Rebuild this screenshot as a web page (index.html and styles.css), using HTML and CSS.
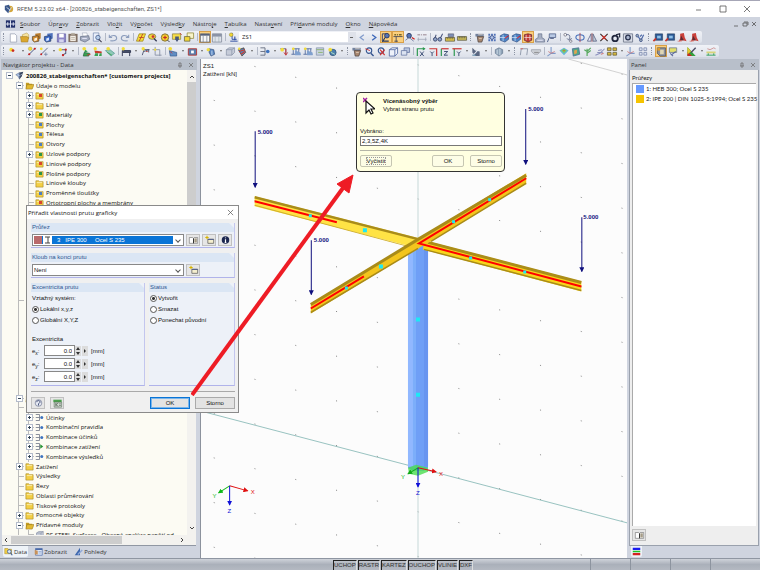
FILE: index.html
```html
<!DOCTYPE html>
<html lang="cs">

<head>
    <meta charset="UTF-8">
    <meta name="viewport" content="width=device-width, initial-scale=1.0">
    <title>RFEM 5.23.02 x64</title>
    <link rel="stylesheet" href="styles.css">
</head>

<body>
    <!-- icon set -->
    <svg class="defs" aria-hidden="true">
        <symbol id="new" viewBox="0 0 12 12"><path d="M3 2h5l2 2v7H3z" fill="#fff" stroke="#8a93a8" stroke-width=".7"/></symbol>
        <symbol id="open" viewBox="0 0 12 12"><path d="M3 3l5-2 2 2v4l-6 3z" fill="#f6e3a0" stroke="#a98a35" stroke-width=".5"/><path d="M1 5h7l2 1-1 5H2z" fill="#dba72e" stroke="#8c6a1c" stroke-width=".5"/></symbol>
        <symbol id="book-o" viewBox="0 0 12 12"><path d="M4 2l6-1v6l-5 2z" fill="#b97b2c"/><path d="M1 5l5-1 2 1v5l-5 1-2-2z" fill="#d08a30" stroke="#4b3a24" stroke-width=".7"/><path d="M3 7l3-1v3l-3 1z" fill="#fff3d8"/></symbol>
        <symbol id="book-b" viewBox="0 0 12 12"><path d="M4 2l6-1v6l-5 2z" fill="#4c70bb"/><path d="M1 5l5-1 2 1v5l-5 1-2-2z" fill="#3a68c4" stroke="#243557" stroke-width=".7"/><path d="M3 7l3-1v3l-3 1z" fill="#d8e6ff"/></symbol>
        <symbol id="save" viewBox="0 0 12 12"><path d="M2 2h9v9H2z" fill="#8c86c8" stroke="#55519b" stroke-width=".6"/><path d="M4 2h5v4H4z" fill="#fff"/><path d="M4 8h5v3H4z" fill="#d4d4ee"/></symbol>
        <symbol id="clip" viewBox="0 0 12 12"><path d="M1 2h10v9H1z" fill="#806f62"/><path d="M3 4h6v6H3z" fill="#f3eee6"/><path d="M4 1h4v2H4z" fill="#b8b0a4"/><path d="M4 6h4M4 8h4" stroke="#a79c8d" stroke-width=".7"/></symbol>
        <symbol id="print" viewBox="0 0 12 12"><path d="M3 1h5l1 4H4z" fill="#fff" stroke="#8a93a8" stroke-width=".5"/><path d="M1 5l9-1 1 4-5 3-5-2z" fill="#a4acc0" stroke="#59627c" stroke-width=".7"/><path d="M3 7h5" stroke="#eef" stroke-width="1"/></symbol>
        <symbol id="preview" viewBox="0 0 12 12"><path d="M2 1h6v9H2z" fill="#eaf0fb" stroke="#6c7ea8" stroke-width=".7"/><circle cx="7" cy="6" r="2.4" fill="#b6cdea" stroke="#3f5685" stroke-width=".8"/><path d="M8 8l3 3" stroke="#445" stroke-width="1.3"/></symbol>
        <symbol id="undo" viewBox="0 0 12 12"><path d="M2 3v3h3M2 6c3-3 8-3 8 1 0 2-3 3-7 2.500" fill="none" stroke="#8c9dbd" stroke-width="1.200"/></symbol>
        <symbol id="redo" viewBox="0 0 12 12"><path d="M10 3v3H7M10 6C7 3 2 3 2 7c0 2 3 3 7 2.500" fill="none" stroke="#8c9dbd" stroke-width="1.200"/></symbol>
        <symbol id="slab" viewBox="0 0 12 12"><path d="M4 2h7l-3 8H1z" fill="#f4dc35" stroke="#8d7715" stroke-width=".7"/><path d="M8 2L4 10M4 6h5" stroke="#c03a2a" stroke-width=".9"/></symbol>
        <symbol id="find" viewBox="0 0 12 12"><ellipse cx="5" cy="5" rx="4" ry="3" fill="#f2d73a" stroke="#6d6842" stroke-width=".8"/><circle cx="6" cy="5" r="1.500" fill="#c33"/><path d="M7 7l3 3" stroke="#343b55" stroke-width="1.500"/></symbol>
        <symbol id="ring" viewBox="0 0 12 12"><circle cx="6" cy="6" r="4" fill="#f6ce2c" stroke="#7c6b38" stroke-width="1"/><path d="M4 6h4M6 4v4" stroke="#c22c25" stroke-width="1.300"/><path d="M9 9l2 2" stroke="#334" stroke-width="1"/></symbol>
        <symbol id="board" viewBox="0 0 12 12"><path d="M1 2h9v6H1z" fill="#f7dd48" stroke="#7e7437" stroke-width=".7"/><path d="M4 5h4v3l-2 3-2-3z" fill="#49597b"/><path d="M9 1l2 2" stroke="#c33" stroke-width="1"/></symbol>
        <symbol id="wins" viewBox="0 0 12 12"><path d="M4 1h7v6H4z" fill="#f8f4c9" stroke="#8d8533" stroke-width=".8"/><path d="M1 5h6v5H1z" fill="#f2d73a" stroke="#666036" stroke-width=".8"/></symbol>
        <symbol id="table" viewBox="0 0 12 12"><path d="M1 2h10v9H1z" fill="#f7f7f7" stroke="#555c6c" stroke-width=".8"/><path d="M1 2h10v2H1z" fill="#566078"/><path d="M4 4v7M8 4v7" stroke="#777f90" stroke-width=".8"/></symbol>
        <symbol id="table2" viewBox="0 0 12 12"><path d="M1 2h10v9H1z" fill="#dfe3eb" stroke="#7d8596" stroke-width=".8"/><path d="M1 2h10v3H1z" fill="#8a93a6"/><path d="M4 5v6M8 5v6" stroke="#9aa" stroke-width=".6"/></symbol>
        <symbol id="load" viewBox="0 0 12 12"><path d="M5 1v7h5M3 10h8" fill="none" stroke="#2b49a0" stroke-width="1"/><circle cx="4" cy="3" r="2" fill="#f1d631" stroke="#867a2b" stroke-width=".5"/><path d="M8 5v4" stroke="#2b49a0" stroke-width="1.200"/></symbol>
        <symbol id="prev" viewBox="0 0 12 12"><path d="M8 3L4 6l4 3" fill="none" stroke="#7f9acb" stroke-width="1.300"/></symbol>
        <symbol id="next" viewBox="0 0 12 12"><path d="M4 3l4 3-4 3" fill="none" stroke="#3b66b8" stroke-width="1.400"/></symbol>
        <symbol id="eye" viewBox="0 0 12 12"><path d="M2 10V2h4" fill="none" stroke="#2d3d68" stroke-width="1"/><circle cx="7" cy="4" r="2.500" fill="#5675b6" stroke="#26365e" stroke-width="1"/><path d="M5 6l-3 5M3 10h6" stroke="#26365e" stroke-width="1.200"/></symbol>
        <symbol id="eye-r" viewBox="0 0 12 12"><circle cx="5" cy="4" r="2.500" fill="#5675b6" stroke="#26365e" stroke-width="1"/><path d="M1 9l4-3 5 4" fill="none" stroke="#6e7ba0" stroke-width="1"/><path d="M8 6l3 2" stroke="#c22" stroke-width="1.400"/></symbol>
        <symbol id="dim" viewBox="0 0 12 12"><path d="M2 3h2m1 0h1m1 0h3" stroke="#7e6a28" stroke-width="1.600"/><path d="M1 5h10M4 5v6M2 10h4" stroke="#3c4258" stroke-width=".9"/></symbol>
        <symbol id="dim-g" viewBox="0 0 12 12"><path d="M1 3h3m1 0h1m1 0h4" stroke="#b3a7b1" stroke-width="1.600"/><path d="M1 8h10M2 6v4M10 6v4" stroke="#9ba2b4" stroke-width=".8"/></symbol>
        <symbol id="glass" viewBox="0 0 12 12"><path d="M2 8l2-5M8 8l3-6" stroke="#46527a" stroke-width="1.100"/><circle cx="3" cy="8" r="2" fill="#8ea3c8" stroke="#303c62" stroke-width=".9"/><circle cx="8" cy="8" r="2" fill="#8ea3c8" stroke="#303c62" stroke-width=".9"/></symbol>
        <symbol id="ruler" viewBox="0 0 12 12"><path d="M1 6h10v4H1z" fill="#e1c84c" stroke="#57543c" stroke-width=".8"/><path d="M3 6v2M5 6v2M7 6v2M9 6v2" stroke="#444" stroke-width=".7"/><path d="M4 2h6v3H4z" fill="#7d8fb8" stroke="#445" stroke-width=".5"/></symbol>
        <symbol id="ruler2" viewBox="0 0 12 12"><path d="M1 5h10v4H1z" fill="#cfc05c" stroke="#57543c" stroke-width=".8"/><path d="M3 5v2M5 5v2M7 5v2M9 5v2" stroke="#444" stroke-width=".8"/></symbol>
        <symbol id="hand" viewBox="0 0 12 12"><path d="M1 2h9v3H1z" fill="#73829e"/><path d="M3 5h7l-2 6H4z" fill="#a98870" stroke="#4a3f3c" stroke-width=".8"/><path d="M4 3h5M5 7h3" stroke="#e9dccb" stroke-width=".8"/></symbol>
        <symbol id="dots" viewBox="0 0 12 12"><path d="M2 2h2v2H2zM5 2h2v2H5zM8 2h2v2H8zM2 5h2v2H2zM8 5h2v2H8zM2 8h2v2H2zM5 8h2v2H5zM8 8h2v2H8z" fill="#5273b8"/><circle cx="6" cy="6" r="2" fill="#b3c5e8" stroke="#2f4680" stroke-width=".8"/></symbol>
        <symbol id="cube-b" viewBox="0 0 12 12"><path d="M2 4l4-2 5 1v5l-4 3-5-2z" fill="#4c83c4" stroke="#29477c" stroke-width=".7"/><path d="M1 6h8M5 3v7" stroke="#cfe2f8" stroke-width=".8"/><path d="M7 7l4-3" stroke="#c23" stroke-width="1.100"/></symbol>
        <symbol id="cube-r" viewBox="0 0 12 12"><path d="M2 3l4-1 4 1v6l-4 2-4-2z" fill="#c33a34" stroke="#5a2230" stroke-width=".8"/><path d="M4 3v6M8 3v6M2 6h8" stroke="#f3dada" stroke-width=".8"/></symbol>
        <symbol id="stamp" viewBox="0 0 12 12"><path d="M4 2h4v4l3 2v3H1V8l3-2z" fill="#a5aec2" stroke="#626d88" stroke-width=".7"/><path d="M3 9h6" stroke="#eef" stroke-width="1"/></symbol>
        <symbol id="flag" viewBox="0 0 12 12"><path d="M3 2h7v4H3z" fill="#b9c9e4" stroke="#495a83" stroke-width=".8"/><path d="M3 6l-2 5M4 7h4" stroke="#495a83" stroke-width="1"/></symbol>
        <symbol id="move" viewBox="0 0 12 12"><circle cx="3" cy="3" r="1.500" fill="#fff" stroke="#556" stroke-width=".7"/><path d="M4 3c4-1 5 2 3 5M5 7l2 2 3-2" fill="none" stroke="#4b587b" stroke-width=".9"/><circle cx="9" cy="10" r="1.300" fill="#fff" stroke="#556" stroke-width=".7"/></symbol>
        <symbol id="rotate" viewBox="0 0 12 12"><ellipse cx="6" cy="6" rx="4.500" ry="3" fill="none" stroke="#3f6bb9" stroke-width="1.100"/><path d="M6 1v10" stroke="#a34b5a" stroke-width="1"/></symbol>
        <symbol id="mirror" viewBox="0 0 12 12"><path d="M5 2v8H1z" fill="#eef" stroke="#4b587b" stroke-width=".8"/><path d="M7 2v8h4z" fill="#c4cad8" stroke="#4b587b" stroke-width=".8"/><path d="M6 1v10" stroke="#a33" stroke-width=".6"/></symbol>
        <symbol id="cross" viewBox="0 0 12 12"><path d="M2 2l8 8M10 2l-8 8" stroke="#3c3434" stroke-width="1.300"/><path d="M4 4l4 4M8 4L4 8" stroke="#d8322a" stroke-width="1.300"/></symbol>
        <symbol id="donut" viewBox="0 0 12 12"><circle cx="5" cy="7" r="3" fill="#e4e8f2" stroke="#20263d" stroke-width="2"/><path d="M6 3l4-1v4" fill="none" stroke="#20263d" stroke-width="1.300"/></symbol>
        <symbol id="gear" viewBox="0 0 12 12"><path d="M1 2h10v9H1z" fill="#d8dce6" stroke="#6c7488" stroke-width=".9"/><circle cx="6" cy="6" r="2.500" fill="#aab6ce" stroke="#2a3350" stroke-width="1.400"/></symbol>
        <symbol id="check" viewBox="0 0 12 12"><circle cx="3" cy="4" r="1.500" fill="#9ab" stroke="#34497f" stroke-width=".8"/><path d="M4 5l3 4 3-6M6 5l2-2" fill="none" stroke="#4f6aa8" stroke-width="1.300"/><circle cx="7" cy="9" r="1.500" fill="#9ab" stroke="#34497f" stroke-width=".8"/></symbol>
        <symbol id="mod" viewBox="0 0 12 12"><path d="M3 2h8v7H3z" fill="#2c5a96" stroke="#1d3657" stroke-width=".6"/><path d="M5 4h4v3H5z" fill="#8fc0e8"/><path d="M1 10l3-3" stroke="#c6332b" stroke-width="1.800"/></symbol>
        <symbol id="pdf" viewBox="0 0 12 12"><path d="M4 2l4-1 1 5 2 4-4-1-5 2 2-4z" fill="#c9403a"/><path d="M5 4l3 5H4z" fill="#5d2a33"/><path d="M1 10h5" stroke="#e0a4a0" stroke-width="1"/></symbol>

        <symbol id="node" viewBox="0 0 12 12"><circle cx="4" cy="4" r="2" fill="#f1dc3c"/><circle cx="6" cy="5" r="1.500" fill="#cc2a20"/></symbol>
        <symbol id="line" viewBox="0 0 12 12"><path d="M2 10l8-8" stroke="#3c4c7c" stroke-width="1"/><circle cx="3" cy="9" r="1.200" fill="#c22"/><circle cx="9" cy="3" r="1.200" fill="#c22"/><circle cx="4" cy="3" r="2" fill="#f1dc3c" stroke="#998a28" stroke-width=".4"/></symbol>
        <symbol id="member" viewBox="0 0 12 12"><path d="M2 10l8-8" stroke="#596787" stroke-width="1"/><circle cx="3" cy="3" r="1.500" fill="#f1dc3c"/><circle cx="3" cy="9" r="1" fill="#c22"/><path d="M8 7v4M6 9h4" stroke="#6a7c9f" stroke-width=".8"/></symbol>
        <symbol id="poly" viewBox="0 0 12 12"><path d="M3 4h6v4l-4 2" fill="none" stroke="#4d5570" stroke-width="1.100"/><circle cx="3" cy="4" r="1.800" fill="#f1dc3c"/><circle cx="9" cy="4" r="1.200" fill="#c22"/><circle cx="6" cy="10" r="1.200" fill="#c22"/></symbol>
        <symbol id="sup" viewBox="0 0 12 12"><path d="M5 4l3 2-4 1z" fill="#2b9c48"/><path d="M4 7l6 1-1 3H3z" fill="#3aa353" stroke="#1d5a37" stroke-width=".7"/><circle cx="4" cy="3" r="2" fill="#f1dc3c"/><path d="M7 10l4-1" stroke="#c33" stroke-width="1"/></symbol>
        <symbol id="sup2" viewBox="0 0 12 12"><path d="M2 5l8 1v2H3z" fill="#c73b2e"/><path d="M3 8h3v3H2zM8 8h2v3H7z" fill="#3aa353"/><circle cx="3" cy="3" r="1.800" fill="#f1dc3c"/></symbol>
        <symbol id="sup3" viewBox="0 0 12 12"><path d="M1 5l5-1 5 4-4 3z" fill="#8ec9b8" stroke="#4a8e8a" stroke-width=".7"/><circle cx="4" cy="3" r="2" fill="#f1dc3c"/><path d="M3 7l5 3" stroke="#3aa353" stroke-width="1"/></symbol>
        <symbol id="beam" viewBox="0 0 12 12"><path d="M2 5h9v2H2zM2 7v4M10 7v4" fill="#4d5570" stroke="#2d3550" stroke-width="1"/><circle cx="3" cy="3" r="1.800" fill="#f1dc3c"/></symbol>
        <symbol id="frame" viewBox="0 0 12 12"><path d="M3 10l2-6h6M5 6l5-2v3" fill="none" stroke="#4d5570" stroke-width="1"/><circle cx="4" cy="3" r="1.800" fill="#f1dc3c"/><path d="M7 6h2" stroke="#b44" stroke-width="1"/></symbol>
        <symbol id="crop" viewBox="0 0 12 12"><path d="M4 1v9h7M1 4h8v7" fill="none" stroke="#8c95a8" stroke-width="1"/><circle cx="4" cy="4" r="1.200" fill="#f1dc3c"/></symbol>
        <symbol id="surf" viewBox="0 0 12 12"><path d="M2 5l8 2v4H3z" fill="#5f8dc4" stroke="#2f5386" stroke-width=".7"/><circle cx="3" cy="3" r="2" fill="#f1dc3c"/><path d="M3 6l2 2" stroke="#c33" stroke-width="1"/></symbol>
        <symbol id="hole" viewBox="0 0 12 12"><path d="M2 3h9v7H2z" fill="#5a7fae" stroke="#b33834" stroke-width="1"/><path d="M5 5h3v3H5z" fill="#fff"/></symbol>
        <symbol id="solid" viewBox="0 0 12 12"><path d="M4 3l5 1 1 5-4 2-2-4z" fill="#5a86c0" stroke="#2d4a78" stroke-width=".7"/><circle cx="3" cy="4" r="1.800" fill="#f1dc3c"/><path d="M7 5v5" stroke="#c7dcf3" stroke-width="1"/></symbol>
        <symbol id="box" viewBox="0 0 12 12"><path d="M2 4l3-2h6v5l-3 3H2z" fill="#c6ccd9" stroke="#8891a6" stroke-width=".8"/><path d="M2 4h6v6M8 4l3-2" fill="none" stroke="#8891a6" stroke-width=".8"/></symbol>
        <symbol id="mesh" viewBox="0 0 12 12"><path d="M2 4l6-2 2 5-4 4z" fill="#5a82b4" stroke="#41311f" stroke-width=".7"/><path d="M3 6l6-2M5 9l4-3" stroke="#d43c2e" stroke-width="1.200"/><circle cx="3" cy="3" r="1.300" fill="#f1dc3c"/></symbol>
        <symbol id="combo" viewBox="0 0 12 12"><path d="M1 2h5v8H1M1 6h5" fill="none" stroke="#666d80" stroke-width="1"/><circle cx="9" cy="6" r="2" fill="#3f74bf"/></symbol>
        <symbol id="combo-g" viewBox="0 0 12 12"><path d="M1 2h5v8H1M1 6h5" fill="none" stroke="#666d80" stroke-width="1"/><path d="M7 3l4 3-4 3z" fill="#249233"/></symbol>
        <symbol id="load-r" viewBox="0 0 12 12"><path d="M2 3h6v7" fill="none" stroke="#596787" stroke-width="1"/><circle cx="4" cy="4" r="2" fill="#f1dc3c"/><path d="M8 3v6M6 7l2 3 2-3" fill="none" stroke="#c33" stroke-width="1"/></symbol>
        <symbol id="load-b" viewBox="0 0 12 12"><path d="M1 9h10M2 3h8M3 3v6M6 3v6M9 3v6" stroke="#4a6399" stroke-width=".9"/><path d="M5 5l6 2v3H5z" fill="#7fa0cf"/><circle cx="3" cy="3" r="1.500" fill="#f1dc3c"/></symbol>
        <symbol id="load-y" viewBox="0 0 12 12"><path d="M2 2h8v8H2z" fill="#c8d2df" stroke="#8190aa" stroke-width=".8"/><path d="M2 4h8M4 7h5" stroke="#8bb26a" stroke-width="1"/></symbol>
        <symbol id="globe" viewBox="0 0 12 12"><circle cx="7" cy="7" r="3.500" fill="#4b7fae" stroke="#2e5475" stroke-width=".8"/><circle cx="4" cy="4" r="2" fill="#f1dc3c"/><path d="M5 7l4 2" stroke="#b6e2c3" stroke-width="1"/></symbol>
        <symbol id="lens" viewBox="0 0 12 12"><circle cx="6" cy="5" r="3" fill="#e5eefb" stroke="#35558f" stroke-width="1.200"/><path d="M2 3l5 2" stroke="#c33" stroke-width="1"/><path d="M8 8l3 3" stroke="#35558f" stroke-width="1.500"/></symbol>
        <symbol id="lens-x" viewBox="0 0 12 12"><circle cx="6" cy="5" r="3" fill="#e5eefb" stroke="#35558f" stroke-width="1.200"/><path d="M5 4l5 6M10 4l-5 6" stroke="#c33" stroke-width="1.300"/></symbol>
        <symbol id="tab-data" viewBox="0 0 12 12"><path d="M1 2h4l1 1h4v6H1z" fill="#f3cf45" stroke="#a98a26" stroke-width=".7"/><circle cx="7" cy="6" r="2.500" fill="#dbe9fb" stroke="#35558f" stroke-width="1"/><path d="M9 8l2 3" stroke="#35558f" stroke-width="1.400"/></symbol>
        <symbol id="tab-show" viewBox="0 0 12 12"><path d="M2 2h9v9H2z" fill="#dfe8f7" stroke="#4a6aa8" stroke-width=".9"/><path d="M2 2h9v2H2z" fill="#4a6aa8"/><path d="M1 4l4 1v5H1z" fill="#c8925a"/><path d="M6 6h4M6 8h4" stroke="#7a94c4" stroke-width=".8"/></symbol>
        <symbol id="wire" viewBox="0 0 12 12"><path d="M2 4l3-2h6v6l-3 3H2zM2 4h6v7M8 4l3-2" fill="#eef2fa" stroke="#5067a0" stroke-width=".9"/></symbol>
        <symbol id="boxes" viewBox="0 0 12 12"><path d="M5 2h6v5H5z" fill="#b9c6df" stroke="#5c6f9c" stroke-width=".8"/><path d="M2 5h6v5H2z" fill="#dbe3f1" stroke="#5c6f9c" stroke-width=".8"/></symbol>
        <symbol id="ax-x" viewBox="0 0 12 12"><path d="M2 11V3h8" fill="none" stroke="#2d9850" stroke-width="1.300"/><path d="M8 1l3 2-3 2z" fill="#2d9850"/><path d="M5 6l4 5M9 6l-4 5" stroke="#33466e" stroke-width="1"/></symbol>
        <symbol id="ax-y" viewBox="0 0 12 12"><path d="M2 3h8v8" fill="none" stroke="#c33" stroke-width="1.300"/><path d="M3 6l2 2 2-2M5 8v3" fill="none" stroke="#33466e" stroke-width="1"/></symbol>
        <symbol id="ax-z" viewBox="0 0 12 12"><path d="M2 11V3" stroke="#2d9850" stroke-width="1.300"/><path d="M2 3h8" stroke="#c33" stroke-width="1.300"/><path d="M5 6h4l-4 4h4" fill="none" stroke="#33466e" stroke-width="1"/></symbol>
        <symbol id="ax-ny" viewBox="0 0 12 12"><path d="M3 11V3" stroke="#2d9850" stroke-width="1.300"/><path d="M1 3h10" stroke="#c33" stroke-width="1.300"/><path d="M6 6l2 2 2-2M8 8v3" fill="none" stroke="#33466e" stroke-width="1"/></symbol>
        <symbol id="persp" viewBox="0 0 12 12"><path d="M2 2l3 3 5 1v5H6L2 7z" fill="#5b6781"/><path d="M4 9l6-7" stroke="#e8edf6" stroke-width="1.200"/><path d="M2 10h4" stroke="#479" stroke-width="1"/></symbol>
        <symbol id="disc" viewBox="0 0 12 12"><path d="M2 4l4-2 4 2v4l-4 3-4-3z" fill="#8fa3b8" stroke="#5d7188" stroke-width=".7"/><path d="M4 4v5M7 3v7" stroke="#dbe6f0" stroke-width=".9"/></symbol>
        <symbol id="gate" viewBox="0 0 12 12"><path d="M2 10l1-7h7l-1 7" fill="none" stroke="#8d97a8" stroke-width="1"/><path d="M2 3h3" stroke="#c66" stroke-width="1"/></symbol>
        <symbol id="pill" viewBox="0 0 12 12"><path d="M1 4h10v2l-3 3H4L1 6z" fill="#cdd0d6" stroke="#9a9ea8" stroke-width=".8"/><path d="M4 7h5" stroke="#777" stroke-width=".8"/></symbol>
        <symbol id="res" viewBox="0 0 12 12"><path d="M5 1v7h5M5 8l-4 3" fill="none" stroke="#7f9ac9" stroke-width="1.200"/><path d="M2 6l3 2 4-2" fill="none" stroke="#c77" stroke-width=".9"/></symbol>
        <symbol id="rain" viewBox="0 0 12 12"><path d="M1 5l5-3 5 3-5 5z" fill="#67b7d8"/><path d="M3 5l3-2 3 2-3 3z" fill="#7fca5c"/><path d="M5 5l1-1 1 1-1 1z" fill="#e0543a"/></symbol>
        <symbol id="rain2" viewBox="0 0 12 12"><path d="M2 3l7-1 1 7-7 2z" fill="#51a887" stroke="#4c6d98" stroke-width=".9"/><path d="M4 5l3-1v4l-3 1z" fill="#e3a24e"/></symbol>
        <symbol id="tree-g" viewBox="0 0 12 12"><path d="M5 11V3M2 4l3 2 4-4M5 8l4-3" fill="none" stroke="#58a85f" stroke-width="1.300"/></symbol>
        <symbol id="wave" viewBox="0 0 12 12"><path d="M1 10l5-2 5-5M4 5l4-1M3 7h6" fill="none" stroke="#8b90bd" stroke-width="1.100"/><path d="M7 9l3-1" stroke="#c66" stroke-width="1"/></symbol>
        <symbol id="grid-y" viewBox="0 0 12 12"><path d="M1 2h4v3H1zM7 2h4v3H7zM1 7h4v3H1zM7 7h4v3H7z" fill="#d8b93b" stroke="#615a3a" stroke-width=".8"/></symbol>
        <symbol id="grid-b" viewBox="0 0 12 12"><path d="M2 2h3v3H2zM7 2h3v3H7zM2 7h3v3H2zM7 7h3v3H7z" fill="#dbe2f0" stroke="#7f8db0" stroke-width=".9"/></symbol>
        <symbol id="panel" viewBox="0 0 12 12"><path d="M2 2h9v9H5L2 8z" fill="#8b8f9b" stroke="#4a4e59" stroke-width=".8"/><path d="M5 4h4v5H5z" fill="#dfd6b4"/><path d="M2 2h3v3H2z" fill="#dc9c2c"/></symbol>
        <symbol id="sel" viewBox="0 0 12 12"><path d="M2 2h8v5H2z" fill="#e2df6a" stroke="#66708c" stroke-width=".8"/><path d="M4 10l5-4M3 8l3 3" stroke="#5a6a9c" stroke-width="1.200"/></symbol>
        <symbol id="color" viewBox="0 0 12 12"><path d="M1 1v10h9z" fill="#2fa03c"/><path d="M1 6l5 5H1z" fill="#c92a22"/><path d="M1 1l4 5-4 3z" fill="#e7c72d"/><path d="M5 7l5-5" stroke="#4a4a62" stroke-width="1.500"/></symbol>
        <symbol id="level" viewBox="0 0 12 12"><path d="M1 6h10v2H1z" fill="#d9d47a"/><path d="M1 10h10M3 8v2M9 8v2" stroke="#2fa05c" stroke-width="1"/><path d="M2 3l3 1 4-2 2 1" fill="none" stroke="#c98a8a" stroke-width=".9"/></symbol>

        <symbol id="folder" viewBox="0 0 10 10"><path d="M1 2h3l1 1h4v6H1z" fill="#f3cf45" stroke="#a98a26" stroke-width=".7"/><path d="M2 4h6" stroke="#fbeeb0" stroke-width="1"/></symbol>
        <symbol id="folder-open" viewBox="0 0 10 10"><path d="M1 2h3l1 1h3v5H1z" fill="#c59d24"/><path d="M2 4h8L8 9H1z" fill="#e2b931" stroke="#94761b" stroke-width=".6"/></symbol>
        <symbol id="book" viewBox="0 0 12 12"><path d="M1 3h4l1 1 1-1h4v7H1z" fill="#fff" stroke="#666" stroke-width=".7"/><path d="M6 4v6" stroke="#333" stroke-width="1.200"/><path d="M7 4h3v5H7z" fill="#a59c87"/></symbol>
        <symbol id="newwin" viewBox="0 0 12 12"><path d="M4 5h7v5H4z" fill="#f5efcf" stroke="#4b4b4b" stroke-width=".8"/><path d="M4 5h7v1H4z" fill="#46578a"/><path d="M3 1v4M1 3h4" stroke="#d6b300" stroke-width="1.300"/></symbol>
        <symbol id="info" viewBox="0 0 12 12"><circle cx="6" cy="6" r="4.500" fill="#1c2750"/><path d="M6 3v1M6 5v4M5 9h2" stroke="#fff" stroke-width="1.400"/></symbol>
        <symbol id="help" viewBox="0 0 12 12"><circle cx="6" cy="6" r="4" fill="#e6eaf4" stroke="#77809a" stroke-width=".9"/><path d="M4 5c0-3 4-2 4 0L6 7v2" fill="none" stroke="#3b4770" stroke-width="1.100"/></symbol>
        <symbol id="calc" viewBox="0 0 12 12"><path d="M1 2h10v3H1z" fill="#4ba04d"/><path d="M2 5h9v6H2z" fill="#cfd8cf" stroke="#4d6650" stroke-width=".7"/><path d="M4 6v4M4 8l3-2M4 8l3 2M8 7h2M8 9h2" stroke="#3d4a3f" stroke-width=".7"/></symbol>
        <symbol id="app" viewBox="0 0 12 12"><circle cx="7" cy="6" r="4" fill="#d3a63a"/><path d="M1 2l5-1 2 5-3 5-4-4z" fill="#3a5689"/><path d="M3 4l4 3M6 9l3-5" stroke="#dfe8f6" stroke-width="1"/></symbol>
        <symbol id="eyes" viewBox="0 0 12 12"><path d="M1 5l5-3 1 4-1 5-2-4z" fill="#8fa6cc" stroke="#54688f" stroke-width=".6"/><path d="M6 2l5-1-2 6-3 4z" fill="#39465f"/><path d="M3 5l3 1M7 6l2-2" stroke="#cfe0f6" stroke-width="1"/></symbol>
        <symbol id="spin" viewBox="0 0 13 10"><path d="M0 0h6v10H0zM7 0h6v10H7z" fill="#dcdcdc"/><path d="M1 4l2-3 2 3zM1 6l2 3 2-3zM9 3l2 2-2 2z" fill="#333"/></symbol>
    </svg>

    <header class="titlebar">
        <svg class="app-icon"><use href="#app"/></svg>
        <h1>RFEM 5.23.02 x64 - [200826_stabeigenschaften, ZS1*]</h1>
        <div class="window-controls">
            <button aria-label="Minimalizovat"><svg viewBox="0 0 8 8"><path d="M1 5h5"/></svg></button>
            <button aria-label="Maximalizovat"><svg viewBox="0 0 8 8"><path d="M1 1h6v6H1z"/></svg></button>
            <button aria-label="Zavřít"><svg viewBox="0 0 8 8"><path d="M1 1l6 6M7 1L1 7"/></svg></button>
        </div>
    </header>

    <nav class="menubar">
        <svg class="menu-icon" viewBox="0 0 12 8"><path d="M1 0h10v8H1z" fill="#22306b"/><path d="M1 4h10M6 0v8M3 2v4M9 2v4" stroke="#e9edf8" stroke-width="1"/></svg>
        <a href="#"><u>S</u>oubor</a>
        <a href="#">Úpr<u>a</u>vy</a>
        <a href="#"><u>Z</u>obrazit</a>
        <a href="#">Vlo<u>ž</u>it</a>
        <a href="#">Vý<u>p</u>očet</a>
        <a href="#">Výsled<u>k</u>y</a>
        <a href="#">Nástro<u>j</u>e</a>
        <a href="#"><u>T</u>abulka</a>
        <a href="#">Nasta<u>v</u>ení</a>
        <a href="#">Pří<u>d</u>avné moduly</a>
        <a href="#"><u>O</u>kno</a>
        <a href="#"><u>N</u>ápověda</a>
        <div class="mdi-controls">
            <button aria-label="Minimalizovat okno"><svg viewBox="0 0 8 8"><path d="M2 6h4"/></svg></button>
            <button aria-label="Obnovit okno"><svg viewBox="0 0 8 8"><path d="M2 3h4v3H2zM3 2h4v3"/></svg></button>
            <button aria-label="Zavřít okno"><svg viewBox="0 0 8 8"><path d="M2 2l4 4M6 2L2 6"/></svg></button>
        </div>
    </nav>

    <div class="toolbars">
        <div class="toolbar">
            <i class="grip"></i>
            <button aria-label="Nový"><svg><use href="#new"/></svg></button>
            <button aria-label="Otevřít"><svg><use href="#open"/></svg></button>
            <button aria-label="Projekt"><svg><use href="#book-o"/></svg></button>
            <button aria-label="Knihovna"><svg><use href="#book-b"/></svg></button>
            <button aria-label="Uložit"><svg><use href="#save"/></svg></button>
            <button aria-label="Schránka"><svg><use href="#clip"/></svg></button>
            <button aria-label="Tisk"><svg><use href="#print"/></svg></button>
            <button aria-label="Náhled"><svg><use href="#preview"/></svg></button>
            <i class="sep"></i>
            <button aria-label="Zpět"><svg><use href="#undo"/></svg></button>
            <button aria-label="Znovu"><svg><use href="#redo"/></svg></button>
            <i class="sep"></i>
            <button aria-label="Plocha"><svg><use href="#slab"/></svg></button>
            <button aria-label="Najít"><svg><use href="#find"/></svg></button>
            <button aria-label="Výběr"><svg><use href="#ring"/></svg></button>
            <button aria-label="Tabule"><svg><use href="#board"/></svg></button>
            <button aria-label="Okna"><svg><use href="#wins"/></svg></button>
            <i class="sep"></i>
            <button class="on" aria-label="Navigátor"><svg><use href="#table"/></svg></button>
            <button aria-label="Tabulky"><svg><use href="#table2"/></svg></button>
            <i class="sep"></i>
            <button aria-label="Zatížení"><svg><use href="#load"/></svg></button>
            <select class="case" aria-label="Zatěžovací stav">
                <option>ZS1</option>
            </select>
            <button aria-label="Předchozí"><svg><use href="#prev"/></svg></button>
            <button aria-label="Další"><svg><use href="#next"/></svg></button>
            <button class="on" aria-label="Zobrazit zatížení"><svg><use href="#eye"/></svg></button>
            <button class="on" aria-label="Zobrazit hodnoty"><svg><use href="#dim"/></svg></button>
            <button aria-label="Zobrazit výsledky"><svg><use href="#eye-r"/></svg></button>
            <button aria-label="Hodnoty výsledků"><svg><use href="#dim-g"/></svg></button>
            <i class="sep"></i>
            <button aria-label="Pohled"><svg><use href="#glass"/></svg></button>
            <button aria-label="Měřítko"><svg><use href="#ruler"/></svg></button>
            <button aria-label="Pravítko"><svg><use href="#ruler2"/></svg></button>
            <i class="grip"></i>
            <button aria-label="Úprava"><svg><use href="#hand"/></svg></button>
            <button aria-label="Rastr"><svg><use href="#dots"/></svg></button>
            <button aria-label="Rovina XY"><svg><use href="#cube-b"/></svg></button>
            <button aria-label="Rovina YZ"><svg><use href="#cube-b"/></svg></button>
            <button class="on" aria-label="Rovina XZ"><svg><use href="#cube-r"/></svg></button>
            <button aria-label="Razítko"><svg><use href="#stamp"/></svg></button>
            <button aria-label="Popis"><svg><use href="#flag"/></svg></button>
            <i class="sep"></i>
            <button aria-label="Posunout"><svg><use href="#move"/></svg></button>
            <button aria-label="Otočit"><svg><use href="#rotate"/></svg></button>
            <button aria-label="Zrcadlit"><svg><use href="#mirror"/></svg></button>
            <button aria-label="Průsečík"><svg><use href="#cross"/></svg></button>
            <button aria-label="Rotace"><svg><use href="#donut"/></svg></button>
            <button aria-label="Nastavit"><svg><use href="#gear"/></svg></button>
            <button aria-label="Spojit"><svg><use href="#check"/></svg></button>
            <i class="grip"></i>
            <button aria-label="Modul 1"><svg><use href="#mod"/></svg></button>
            <button aria-label="Modul 2"><svg><use href="#mod"/></svg></button>
            <button aria-label="Modul 3"><svg><use href="#pdf"/></svg></button>
            <button aria-label="Modul 4"><svg><use href="#pdf"/></svg></button>
        </div>
        <div class="toolbar">
            <i class="grip"></i>
            <button class="drop" aria-label="Uzel"><svg><use href="#node"/></svg></button>
            <button aria-label="Linie"><svg><use href="#line"/></svg></button>
            <button class="drop" aria-label="Prut"><svg><use href="#member"/></svg></button>
            <button class="drop" aria-label="Křivka"><svg><use href="#poly"/></svg></button>
            <i class="sep"></i>
            <button aria-label="Uzlová podpora"><svg><use href="#sup"/></svg></button>
            <button aria-label="Liniová podpora"><svg><use href="#sup2"/></svg></button>
            <button aria-label="Plošná podpora"><svg><use href="#sup3"/></svg></button>
            <i class="sep"></i>
            <button class="drop" aria-label="Nosník"><svg><use href="#beam"/></svg></button>
            <button aria-label="Rám"><svg><use href="#frame"/></svg></button>
            <button aria-label="Řez"><svg><use href="#crop"/></svg></button>
            <i class="sep"></i>
            <button class="drop" aria-label="Nová plocha"><svg><use href="#surf"/></svg></button>
            <button class="drop" aria-label="Otvor"><svg><use href="#hole"/></svg></button>
            <button class="drop" aria-label="Těleso"><svg><use href="#solid"/></svg></button>
            <button aria-label="Kvádr"><svg><use href="#box"/></svg></button>
            <button class="drop" aria-label="Síť"><svg><use href="#mesh"/></svg></button>
            <i class="sep"></i>
            <button class="drop" aria-label="Kombinace"><svg><use href="#combo"/></svg></button>
            <button aria-label="Uzlové zatížení"><svg><use href="#load-r"/></svg></button>
            <button aria-label="Zatížení prutu"><svg><use href="#load-b"/></svg></button>
            <button aria-label="Zatížení linie"><svg><use href="#load-b"/></svg></button>
            <button aria-label="Zatížení plochy"><svg><use href="#load-y"/></svg></button>
            <button class="drop" aria-label="Generovat"><svg><use href="#globe"/></svg></button>
            <i class="grip"></i>
            <button aria-label="Posun pohledu"><svg><use href="#hand"/></svg></button>
            <button aria-label="Lupa"><svg><use href="#lens"/></svg></button>
            <button aria-label="Zobrazit vše"><svg><use href="#lens-x"/></svg></button>
            <button aria-label="Izometrie"><svg><use href="#wire"/></svg></button>
            <button aria-label="Předchozí pohled"><svg><use href="#boxes"/></svg></button>
            <i class="sep"></i>
            <button aria-label="Pohled X"><svg><use href="#ax-x"/></svg></button>
            <button aria-label="Pohled Y"><svg><use href="#ax-y"/></svg></button>
            <button aria-label="Pohled Z"><svg><use href="#ax-z"/></svg></button>
            <button class="drop" aria-label="Pohled -Y"><svg><use href="#ax-ny"/></svg></button>
            <button class="drop" aria-label="Perspektiva"><svg><use href="#persp"/></svg></button>
            <i class="sep"></i>
            <button class="drop" aria-label="Vykreslení"><svg><use href="#disc"/></svg></button>
            <i class="grip"></i>
            <button aria-label="Deformace"><svg><use href="#gate"/></svg></button>
            <button aria-label="Průběh"><svg><use href="#pill"/></svg></button>
            <i class="sep"></i>
            <button aria-label="Reakce"><svg><use href="#res"/></svg></button>
            <button aria-label="Napětí"><svg><use href="#rain"/></svg></button>
            <button aria-label="Napětí těles"><svg><use href="#rain2"/></svg></button>
            <button aria-label="Vnitřní síly"><svg><use href="#tree-g"/></svg></button>
            <button aria-label="Průhyby"><svg><use href="#wave"/></svg></button>
            <button class="drop" aria-label="Více oken"><svg><use href="#grid-y"/></svg></button>
            <button aria-label="Výsledek řezu"><svg><use href="#res"/></svg></button>
            <button aria-label="Mřížka"><svg><use href="#grid-b"/></svg></button>
            <i class="grip"></i>
            <button class="on" aria-label="Panel"><svg><use href="#panel"/></svg></button>
            <button class="drop" aria-label="Filtr"><svg><use href="#sel"/></svg></button>
            <button class="drop" aria-label="Barvy"><svg><use href="#color"/></svg></button>
            <button aria-label="Úroveň"><svg><use href="#level"/></svg></button>
        </div>
    </div>

    <main class="workspace">
        <aside class="dock navigator">
            <div class="dock-title">
                <h2>Navigátor projektu - Data</h2>
                <svg viewBox="0 0 20 8"><path d="M4 2v3M6 2v3M3 5h4M4 2h2M5 5v2M14 2l4 4M18 2l-4 4"/></svg>
            </div>
            <div class="tree-box">
                <ul class="tree">
                    <li class="root minus"><svg><use href="#eyes"/></svg>200826_stabeigenschaften* [customers projects]</li>
                    <li class="l1 minus"><svg><use href="#folder-open"/></svg>Údaje o modelu</li>
                    <li class="l2 plus f-red"><svg><use href="#folder"/></svg>Uzly</li>
                    <li class="l2 plus"><svg><use href="#folder"/></svg>Linie</li>
                    <li class="l2 plus f-green"><svg><use href="#folder"/></svg>Materiály</li>
                    <li class="l2 f-blue"><svg><use href="#folder"/></svg>Plochy</li>
                    <li class="l2 f-blue"><svg><use href="#folder"/></svg>Tělesa</li>
                    <li class="l2 f-blue"><svg><use href="#folder"/></svg>Otvory</li>
                    <li class="l2 plus f-green"><svg><use href="#folder"/></svg>Uzlové podpory</li>
                    <li class="l2 f-red"><svg><use href="#folder"/></svg>Liniové podpory</li>
                    <li class="l2 f-green"><svg><use href="#folder"/></svg>Plošné podpory</li>
                    <li class="l2"><svg><use href="#folder"/></svg>Liniové klouby</li>
                    <li class="l2 f-blue"><svg><use href="#folder"/></svg>Proměnné tloušťky</li>
                    <li class="l2 f-red"><svg><use href="#folder"/></svg>Ortotropní plochy a membrány</li>
                    <li class="l1 covered"></li>
                    <li class="l1 minus"><svg><use href="#folder-open"/></svg></li>
                    <li class="l1"></li>
                    <li class="l2 plus"><svg><use href="#combo"/></svg>Účinky</li>
                    <li class="l2 plus"><svg><use href="#combo"/></svg>Kombinační pravidla</li>
                    <li class="l2 plus"><svg><use href="#combo"/></svg>Kombinace účinků</li>
                    <li class="l2 plus"><svg><use href="#combo-g"/></svg>Kombinace zatížení</li>
                    <li class="l2 plus"><svg><use href="#combo"/></svg>Kombinace výsledků</li>
                    <li class="l1 plus"><svg><use href="#folder"/></svg>Zatížení</li>
                    <li class="l1"><svg><use href="#folder"/></svg>Výsledky</li>
                    <li class="l1"><svg><use href="#folder"/></svg>Řezy</li>
                    <li class="l1"><svg><use href="#folder"/></svg>Oblasti průměrování</li>
                    <li class="l1"><svg><use href="#folder"/></svg>Tiskové protokoly</li>
                    <li class="l1 plus"><svg><use href="#folder"/></svg>Pomocné objekty</li>
                    <li class="l1 minus"><svg><use href="#folder-open"/></svg>Přídavné moduly</li>
                    <li class="l2 last"><svg><use href="#box"/></svg>RF-STEEL Surfaces - Obecná analýza napětí od</li>
                </ul>
                <div class="vscroll">
                    <svg viewBox="0 0 8 8"><path d="M2 5l2-2 2 2"/></svg>
                    <i></i>
                    <svg viewBox="0 0 8 8"><path d="M2 3l2 2 2-2"/></svg>
                </div>
                <div class="hscroll">
                    <svg viewBox="0 0 8 8"><path d="M5 2L3 4l2 2"/></svg>
                    <i></i>
                    <svg viewBox="0 0 8 8"><path d="M3 2l2 2-2 2"/></svg>
                </div>
            </div>
            <div class="tabs">
                <button class="active"><svg><use href="#tab-data"/></svg>Data</button>
                <button><svg><use href="#tab-show"/></svg>Zobrazit</button>
                <button><svg viewBox="0 0 12 12"><path d="M1 11L8 1v10z" fill="#3c66ad"/><path d="M5 10l6-6" stroke="#8ea8d8" stroke-width="2"/></svg>Pohledy</button>
            </div>
        </aside>

        <section class="view">
            <svg viewBox="201 59 426 498" preserveAspectRatio="xMidYMid slice" role="img" aria-label="Model">
                <defs>
                    <pattern id="lattice" width="40.700" height="44.600" patternUnits="userSpaceOnUse" patternTransform="translate(499 175) skewY(14.800)">
                        <path d="M0 0h1v1H0z" fill="#888"/>
                    </pattern>
                    <marker id="tip" viewBox="0 0 6 6" refX="5" refY="3" markerWidth="5" markerHeight="5" markerUnits="userSpaceOnUse" orient="auto"><path d="M0 0l6 3-6 3z" fill="context-stroke"/></marker>
                </defs>
                <path d="M200 59h427v498H200z" fill="url(#lattice)"/>

                <!-- work plane lines -->
                <path d="M418 59v498" stroke="#c6d8d8"/>
                <path d="M200 410L418 467 627 522" fill="none" stroke="#80b4b2" stroke-width=".8"/>
                <path d="M568 59l59 16" stroke="#c0c0c0" stroke-width=".7"/>

                <!-- column -->
                <path d="M408 244h20v223l-4 3h-12l-4-3z" fill="#6f9ff6"/>
                <path d="M408 246h5v220h-5z" fill="#91b8ff"/>
                <path d="M413 246h3v221h-3z" fill="#7caefa"/>
                <path d="M424 247h4v219h-4z" fill="#6895f0"/>

                <!-- beams -->
                <path d="M255 196l164 42v10L255 206z" fill="#ffe345"/>
                <path d="M255 197l164 42" stroke="#a98c1a" stroke-width="2.500"/>
                <path d="M255 205l153 41" stroke="#cfae2c" stroke-width="1"/>
                <path d="M424 240l157 41v10l-158-42z" fill="#f7d51c"/>
                <path d="M428 242l153 40" stroke="#ab8d18" stroke-width="3"/>
                <path d="M424 249l157 41" stroke="#a98b18" stroke-width="1.500"/>
                <path d="M311 303l108-65 107-65v10l-95 58-13 7-107 65z" fill="#f3c51d"/>
                <path d="M311 304l107-65 108-64" fill="none" stroke="#a98b18" stroke-width="3"/>
                <path d="M311 312l107-64M431 241l95-58" stroke="#a98b18" stroke-width="1.500"/>

                <!-- selected member parts -->
                <path d="M255 201l82 21M311 308l53-32M526 178l-107 65 162 43" fill="none" stroke="#f00" stroke-width="2"/>
                <path d="M309 214h3v3h-3zM363 228h4v4h-4zM345 286h3v3h-3zM379 264h4v4h-4zM452 220h3v3h-3zM488 198h3v3h-3zM469 256h3v3h-3zM523 270h3v3h-3zM416 317h4v4h-4zM416 392h4v4h-4z" fill="#1ee8f4"/>

                <!-- nodal loads -->
                <g stroke="#10107e" stroke-width="1">
                    <path d="M255.500 131v56" marker-end="url(#tip)"/>
                    <path d="M311.500 240v54" marker-end="url(#tip)"/>
                    <path d="M525.500 109v55" marker-end="url(#tip)"/>
                    <path d="M581.500 217v54" marker-end="url(#tip)"/>
                </g>
                <g class="load-label">
                    <text x="258" y="134">5.000</text>
                    <text x="314" y="242">5.000</text>
                    <text x="528" y="111">5.000</text>
                    <text x="583" y="219">5.000</text>
                </g>

                <!-- support -->
                <path d="M408 467l8-3 12 3v4l-10 4-9-2z" fill="#48dd4e" opacity=".8"/>
                <path d="M418 467l18 4" stroke="#e01010" marker-end="url(#tip)"/>
                <path d="M418 467l-10 6" stroke="#10a818" marker-end="url(#tip)"/>
                <path d="M418 467v19" stroke="#1010d8" marker-end="url(#tip)"/>
                <path d="M230 485l18 5" stroke="#e01010" marker-end="url(#tip)"/>
                <path d="M230 485l-11 7" stroke="#10b818" marker-end="url(#tip)"/>
                <path d="M230 485v19" stroke="#1010d8" marker-end="url(#tip)"/>
                <g class="axis-label">
                    <text class="x" x="439" y="475">X</text>
                    <text class="y" x="401" y="478">Y</text>
                    <text class="z" x="416" y="494">Z</text>
                    <text class="x" x="251" y="493">X</text>
                    <text class="y" x="213" y="497">Y</text>
                    <text class="z" x="228" y="512">Z</text>
                </g>
            </svg>
            <p class="view-label">ZS1<br>Zatížení [kN]</p>
        </section>

        <aside class="dock sections">
            <div class="dock-title">
                <h2>Panel</h2>
                <svg viewBox="0 0 20 8"><path d="M4 2v3M6 2v3M3 5h4M4 2h2M5 5v2M14 2l4 4M18 2l-4 4"/></svg>
            </div>
            <div class="sections-body">
                <h3>Průřezy</h3>
                <ul>
                    <li><i class="blue"></i>1: HEB 300; Ocel S 235</li>
                    <li><i class="gold"></i>2: IPE 200 | DIN 1025-5:1994; Ocel S 235</li>
                </ul>
                <button class="icon-btn" aria-label="Nastavení panelu"><svg><use href="#book"/></svg></button>
            </div>
            <div class="tabs">
                <button class="active" aria-label="Barevná škála"><svg viewBox="0 0 12 12"><path d="M1 1h10v3H1z" fill="#1a1af0"/><path d="M1 5h10v2H1z" fill="#22c228"/><path d="M1 8h10v3H1z" fill="#d42222"/></svg></button>
            </div>
        </aside>
    </main>

    <footer class="statusbar">
        <span class="hint"></span>
        <span class="mode">UCHOP</span>
        <span class="mode">RASTR</span>
        <span class="mode">KARTEZ</span>
        <span class="mode">OUCHOP</span>
        <span class="mode">VLINIE</span>
        <span class="mode">DXF</span>
        <span class="fields"><i></i><i></i><i></i><i></i></span>
    </footer>

    <section class="dialog assign">
        <div class="dialog-title">
            <h2>Přiřadit vlastnosti prutu graficky</h2>
            <button aria-label="Zavřít dialog"><svg viewBox="0 0 8 8"><path d="M1 1l6 6M7 1L1 7"/></svg></button>
        </div>
        <form class="dialog-body">
            <fieldset class="group">
                <h3><label for="section">Průřez</label></h3>
                <div class="field">
                    <div class="select selected">
                        <svg viewBox="0 0 22 8"><path d="M0 0h8v8H0z" fill="#b9696b"/><path d="M9 0h9v8H9z" fill="#fff"/><path d="M11 1h5M11 7h5M14 1v6" stroke="#444" stroke-width="1"/></svg>
                        <select id="section">
                            <option>3&nbsp;&nbsp;&nbsp;IPE 300&nbsp;&nbsp;&nbsp;&nbsp;&nbsp;Ocel S 235</option>
                        </select>
                    </div>
                    <button type="button" class="icon-btn" aria-label="Knihovna průřezů"><svg><use href="#book"/></svg></button>
                    <button type="button" class="icon-btn" aria-label="Nový průřez"><svg><use href="#newwin"/></svg></button>
                    <button type="button" class="icon-btn" aria-label="Informace"><svg><use href="#info"/></svg></button>
                </div>
            </fieldset>
            <fieldset class="group">
                <h3><label for="hinge">Kloub na konci prutu</label></h3>
                <div class="field">
                    <div class="select">
                        <select id="hinge">
                            <option>Není</option>
                        </select>
                    </div>
                    <button type="button" class="icon-btn second" aria-label="Nový kloub"><svg><use href="#newwin"/></svg></button>
                </div>
            </fieldset>
            <div class="columns">
                <fieldset class="group">
                    <h3>Excentricita prutu</h3>
                    <div class="stack">
                        <p>Vztažný systém:</p>
                        <label class="choice"><input type="radio" name="system" checked>Lokální x,y,z</label>
                        <label class="choice"><input type="radio" name="system">Globální X,Y,Z</label>
                    </div>
                    <div class="stack offsets">
                        <p>Excentricita</p>
                        <div class="offset"><label for="ex">e<sub>x</sub>:</label><input id="ex" value="0.0"><svg><use href="#spin"/></svg>[mm]</div>
                        <div class="offset"><label for="ey">e<sub>y</sub>:</label><input id="ey" value="0.0"><svg><use href="#spin"/></svg>[mm]</div>
                        <div class="offset"><label for="ez">e<sub>z</sub>:</label><input id="ez" value="0.0"><svg><use href="#spin"/></svg>[mm]</div>
                    </div>
                </fieldset>
                <fieldset class="group">
                    <h3>Status</h3>
                    <div class="stack">
                        <label class="choice"><input type="radio" name="status" checked>Vytvořit</label>
                        <label class="choice"><input type="radio" name="status">Smazat</label>
                        <label class="choice"><input type="radio" name="status">Ponechat původní</label>
                    </div>
                </fieldset>
            </div>
            <div class="actions">
                <button type="button" class="icon-btn" aria-label="Nápověda k dialogu"><svg><use href="#help"/></svg></button>
                <button type="button" class="icon-btn" aria-label="Jednotky"><svg><use href="#calc"/></svg></button>
                <button type="button" class="btn default">OK</button>
                <button type="button" class="btn">Storno</button>
            </div>
        </form>
    </section>

    <section class="dialog pick">
        <div class="pick-head">
            <svg viewBox="0 0 12 18"><path d="M0 1l4 4M4 1L0 5" stroke="#a020a0" stroke-width="1.500"/><path d="M3 4v12l3-3 2 4 2-1-2-4h4z" fill="#fff" stroke="#111" stroke-width="1.200"/></svg>
            <div>
                <h2>Vícenásobný výběr</h2>
                <p>Vybrat stranu prutu</p>
            </div>
        </div>
        <label for="picked">Vybráno:</label>
        <input id="picked" value="2,3,5Z,4K">
        <div class="pick-actions">
            <button class="btn"><span>Vyčistit</span></button>
            <button class="btn">OK</button>
            <button class="btn">Storno</button>
        </div>
    </section>

    <!-- callout arrow between the two dialogs -->
    <svg class="callout" viewBox="0 0 164 222" aria-hidden="true">
        <path d="M1 221L152 14" stroke="#ee1c25" stroke-width="4"/>
        <path d="M162 1l-4 18-12-9z" fill="#ee1c25" stroke="#ee1c25" stroke-width="1"/>
    </svg>
</body>

</html>
```
FILE: styles.css
```css
* {
    box-sizing: border-box;
}

body {
    position: relative;
    display: flex;
    flex-direction: column;
    height: 100vh;
    margin: 0;
    overflow: hidden;
    border-top: 1px solid #a6a6b6;
    background-color: #cfd4df;
    color: #222;
    font: 6px/10px "Open Sans", sans-serif;
}

h1, h2, h3, p, ul, fieldset {
    margin: 0;
    padding: 0;
    border: 0;
    font-size: inherit;
    font-weight: normal;
    list-style: none;
}

button, input, select {
    margin: 0;
    padding: 0;
    border: 0;
    background: none;
    color: inherit;
    font: inherit;
}

select {
    appearance: none;
}

.defs {
    position: absolute;
    width: 0;
    height: 0;
}

/* title bar and menu */
.titlebar {
    display: flex;
    align-items: center;
    flex: 0 0 16px;
    padding-left: 4px;
    background-color: #fff;
    color: #555;
    font-family: Roboto, sans-serif;
}

.app-icon {
    width: 10px;
    height: 10px;
    margin-right: 3px;
}

.window-controls {
    display: flex;
    gap: 16px;
    margin-left: auto;
    padding-right: 9px;
}

.window-controls button,
.mdi-controls button {
    display: flex;
}

.window-controls svg {
    width: 8px;
    height: 8px;
}

.window-controls path,
.mdi-controls path,
.dialog-title path {
    fill: none;
    stroke: #555;
    stroke-width: .8;
}

.menubar {
    display: flex;
    align-items: center;
    flex: 0 0 14px;
    gap: 8px;
    padding: 0 2px 0 5px;
    color: #333;
}

.menubar a {
    color: inherit;
    text-decoration: none;
}

.menu-icon {
    width: 11px;
    height: 8px;
    margin-right: -4px;
}

.mdi-controls {
    display: flex;
    gap: 1px;
    margin-left: auto;
}

.mdi-controls svg {
    width: 8px;
    height: 8px;
}

/* toolbars */
.toolbars {
    display: flex;
    flex-direction: column;
    flex: 0 0 28px;
    align-items: flex-start;
    gap: 2px;
}

.toolbar {
    display: flex;
    align-items: center;
    height: 12px;
    margin-left: 1px;
    padding-right: 2px;
    border-radius: 2px;
    background-image: linear-gradient(#f0f2f7, #dde1ea);
}

.toolbar button {
    display: flex;
    align-items: center;
    height: 12px;
}

.toolbar button svg {
    width: 12px;
    height: 11px;
}

.toolbar .on {
    background-color: #fbcf7d;
    box-shadow: inset 0 0 0 1px #d9a048;
}

.toolbar .drop::after {
    content: "";
    margin: 0 2px 0 3px;
    border: 2px solid transparent;
    border-top-color: #666;
    border-bottom: 0;
    border-left-width: 1px;
    border-right-width: 1px;
}

.grip {
    width: 4px;
    height: 8px;
    margin: 0 0 0 2px;
    border-left: 1px dotted #8c93a3;
}

.sep {
    width: 1px;
    height: 8px;
    margin: 0 1px 0 2px;
    background-color: #b3b9c7;
}

.case {
    width: 117px;
    height: 10px;
    padding-left: 3px;
    background: linear-gradient(#666, #666) right 3px center / 3px 1px no-repeat, linear-gradient(to right, #fff 109px, #dfe2ea 109px);
}

/* docks */
.workspace {
    display: flex;
    flex: 1;
    min-height: 0;
}

.dock {
    display: flex;
    flex-direction: column;
    min-width: 0;
}

.dock-title {
    display: flex;
    align-items: center;
    justify-content: space-between;
    flex: 0 0 11px;
    padding: 0 2px;
    background-color: #b8bfca;
    color: #333;
    font-family: "Open Sans", sans-serif;
}

.dock-title svg {
    width: 20px;
    height: 8px;
}

.dock-title path {
    fill: none;
    stroke: #666;
    stroke-width: .7;
}

.navigator {
    flex: 0 0 196px;
    margin: 0 3px 0 1px;
}

.tree-box {
    display: grid;
    grid-template-rows: minmax(0, 1fr) 10px;
    grid-template-columns: minmax(0, 1fr) 9px;
    flex: 1;
    min-height: 0;
    margin: 0 1px;
    border-bottom: 1px solid #9097a3;
    background-color: #fcfbf3;
}

.tree {
    display: grid;
    grid-template-rows: repeat(47, minmax(0, 1fr));
    grid-auto-rows: 0;
    padding: 1px 0 5px;
    overflow: hidden;
    color: #111;
    white-space: nowrap;
}

.tree li {
    position: relative;
    display: flex;
    align-items: center;
    gap: 2px;
}

.tree svg {
    flex: none;
    width: 9px;
    height: 9px;
}

.tree .root {
    padding-left: 13px;
    font-weight: bold;
}

.tree .l1 {
    padding-left: 23px;
    background: linear-gradient(#bbb, #bbb) 16px 0 / 1px 100% no-repeat, linear-gradient(#bbb, #bbb) 16px 50% / 6px 1px no-repeat;
}

.tree .l2 {
    padding-left: 33px;
    background: linear-gradient(#bbb, #bbb) 16px 0 / 1px 100% no-repeat, linear-gradient(#bbb, #bbb) 26px 0 / 1px 100% no-repeat, linear-gradient(#bbb, #bbb) 26px 50% / 6px 1px no-repeat;
}

/* rows behind the open dialog */
.tree .covered {
    grid-row: span 19;
}

.tree .last {
    align-self: start;
    height: 9px;
}

/* expander boxes */
.plus::before,
.minus::before {
    content: "";
    position: absolute;
    left: 14px;
    width: 5px;
    height: 5px;
    border: 1px solid #b4bccb;
    background: linear-gradient(#345, #345) center / 3px 1px no-repeat #fff;
}

.plus::before {
    background: linear-gradient(#345, #345) center / 3px 1px no-repeat, linear-gradient(#345, #345) center / 1px 3px no-repeat #fff;
}

.root.minus::before {
    left: 4px;
}

.l2.plus::before {
    left: 24px;
}

/* coloured mark on the folder */
.f-red::after,
.f-green::after,
.f-blue::after {
    content: "";
    position: absolute;
    left: 37px;
    width: 3px;
    height: 3px;
    background-color: #d8452c;
}

.f-green::after {
    background-color: #2d9445;
}

.f-blue::after {
    background-color: #4c7dbd;
}

.vscroll,
.hscroll {
    display: flex;
    background-color: #f3f2ef;
}

.vscroll {
    flex-direction: column;
    justify-content: space-between;
    align-items: center;
    padding: 3px 0;
}

.vscroll svg,
.hscroll svg {
    width: 8px;
    height: 8px;
}

.vscroll i {
    flex: 0 0 60%;
    width: 9px;
    margin: 1px 0 auto;
    background-color: #cdcdcd;
}

.hscroll {
    grid-column: span 2;
    align-items: center;
    padding-right: 10px;
}

.hscroll i {
    flex: 0 0 111px;
    height: 8px;
    margin: 0 auto 0 1px;
    background-color: #cdcdcd;
}

.vscroll path,
.hscroll path {
    fill: none;
    stroke: #444;
}

.tabs {
    display: flex;
    flex: 0 0 12px;
    gap: 5px;
    padding: 0 2px 1px;
}

.tabs button {
    display: flex;
    align-items: center;
    gap: 1px;
    padding: 0 1px;
    color: #333;
}

.tabs .active {
    border-radius: 0 0 2px 2px;
    background-color: #eef3f8;
}

.tabs svg {
    width: 9px;
    height: 9px;
}

/* model window */
.view {
    position: relative;
    flex: 1;
    min-width: 0;
    border-left: 1px solid #8c929d;
    background-color: #fcfcfc;
}

.view > svg {
    display: block;
    width: 100%;
    height: 100%;
}

.view-label {
    position: absolute;
    top: 3px;
    left: 2px;
    line-height: 8px;
    font-family: "Liberation Sans", sans-serif;
}

.load-label {
    fill: #10107e;
    font: bold 6px "Liberation Sans", sans-serif;
}

.axis-label {
    font: 6px "Liberation Sans", sans-serif;
}

.x { fill: #e01010; }
.y { fill: #10b818; }
.z { fill: #1010d8; }

.sections {
    flex: 0 0 130px;
    margin: 0 1px 0 2px;
    font-family: Lato, sans-serif;
}

.sections-body {
    display: flex;
    flex-direction: column;
    flex: 1;
    min-height: 0;
    padding: 3px 2px 4px 2px;
    border: 1px solid #9aa1ad;
    border-top: 0;
    background-color: #eee;
}

.sections ul {
    flex: 1;
    padding-left: 3px;
    border-left: 1px solid #aaa;
    border-top: 1px solid #aaa;
    background-color: #fff;
    white-space: nowrap;
}

.sections li {
    display: flex;
    align-items: center;
    gap: 2px;
}

.sections li i {
    flex: none;
    width: 8px;
    height: 8px;
}

.blue { background-color: #6699ff; }
.gold { background-color: #f6c400; }

.icon-btn {
    display: flex;
    align-items: center;
    justify-content: center;
    width: 14px;
    height: 12px;
    border: 1px solid #c0c0c0;
    background-color: #e6e6e6;
}

.icon-btn svg {
    width: 11px;
    height: 10px;
}

.sections .icon-btn {
    margin-top: 3px;
}

/* status bar */
.statusbar {
    display: flex;
    flex: 0 0 12px;
    align-items: center;
    gap: 1px;
    border-top: 1px solid #8f96a2;
    background-image: linear-gradient(#cfd3da, #aab0ba 50%, #b4b9c2);
    color: #333;
    font-family: "Liberation Sans", sans-serif;
}

.hint {
    flex: 0 1 332px;
}

.mode {
    border-left: 1px solid #222;
    border-top: 1px solid #222;
    border-right: 1px solid #ddd;
    line-height: 9px;
}

.fields {
    display: flex;
    justify-content: flex-end;
    flex: 1;
    gap: 39px;
    padding-right: 49px;
}

.fields i {
    width: 1px;
    height: 11px;
    background-color: #8d949f;
}

/* dialogs */
.dialog {
    position: absolute;
    font-family: "Liberation Sans", sans-serif;
    line-height: 8px;
    color: #111;
}

.assign {
    top: 204px;
    left: 26px;
    width: 213px;
    border: 1px solid #8a8a8a;
    background-color: #f0f0f0;
}

.dialog-title {
    display: flex;
    align-items: center;
    justify-content: space-between;
    height: 13px;
    padding: 0 4px 0 1px;
    background-color: #fff;
    font-family: "Open Sans", sans-serif;
}

.dialog-title svg {
    display: block;
    width: 7px;
    height: 7px;
}

.dialog-body {
    display: flex;
    flex-direction: column;
    gap: 5px;
    padding: 4px 3px 3px 4px;
}

.group {
    min-width: 0;
    border-right: 1px solid #c3c6ee;
    border-bottom: 1px solid #b0b3ea;
    background-color: #edf1f8;
}

.group h3 {
    height: 9px;
    padding-left: 1px;
    background-color: #dbe6f4;
    clip-path: polygon(0 0, calc(100% - 5px) 0, 100% 5px, 100% 100%, 0 100%);
    color: #2b5591;
}

.field {
    display: flex;
    gap: 2px;
    padding: 2px 2px 1px 1px;
}

.select {
    position: relative;
    display: flex;
    align-items: center;
    flex: 1;
    height: 12px;
    border: 1px solid #888;
    background-color: #fff;
}

.select::after {
    content: "";
    position: absolute;
    right: 3px;
    top: 3px;
    width: 3px;
    height: 3px;
    border: solid #555;
    border-width: 0 1px 1px 0;
    transform: rotate(45deg);
}

.select select {
    flex: 1;
    min-width: 0;
    padding-left: 1px;
}

.selected {
    padding: 1px 10px 1px 1px;
}

.selected svg {
    width: 22px;
    height: 8px;
    background-color: #0a74d6;
}

.selected select {
    height: 8px;
    background-color: #0a74d6;
    color: #fff;
}

.second {
    margin-right: 32px;
}

.columns {
    display: grid;
    grid-template-columns: 114px 1fr;
    gap: 4px;
}

.stack {
    display: flex;
    flex-direction: column;
    gap: 3px;
    padding: 2px 1px 3px;
}

.offsets {
    gap: 2px;
    padding: 8px 1px 3px;
}

.choice {
    display: flex;
    align-items: center;
    gap: 1px;
    height: 8px;
}

.choice input {
    appearance: none;
    width: 7px;
    height: 7px;
    border: 1px solid #555;
    border-radius: 50%;
    background-color: #fff;
}

.choice input:checked {
    background-image: radial-gradient(#333 1px, #fff 2px);
}

.offset {
    display: flex;
    align-items: center;
    height: 11px;
}

.offset label {
    width: 12px;
}

.offset sub {
    font-size: 5px;
    line-height: 0;
}

.offset input {
    width: 31px;
    height: 11px;
    padding-right: 2px;
    border: 1px solid #888;
    background-color: #fff;
    text-align: right;
}

.offset svg {
    width: 13px;
    height: 10px;
    margin-right: 3px;
}

.actions {
    display: flex;
    gap: 5px;
    padding-top: 5px;
    border-top: 1px solid #a9a9a9;
}

.btn {
    width: 40px;
    height: 12px;
    border: 1px solid #aaa;
    background-color: #e3e3e3;
    text-align: center;
}

.default {
    margin-left: auto;
    border-color: #0a74d6;
    box-shadow: inset 0 0 0 1px #7ab5ea;
}

.pick {
    top: 91px;
    left: 356px;
    width: 149px;
    padding: 4px 2px 4px 3px;
    border: 1px solid #333;
    border-radius: 4px;
    background-color: #ffffe1;
}

.pick-head {
    display: flex;
    gap: 8px;
    padding: 0 0 12px 3px;
}

.pick-head svg {
    width: 12px;
    height: 18px;
}

.pick h2 {
    font-weight: bold;
}

.pick label {
    display: block;
}

.pick input {
    width: 100%;
    height: 10px;
    margin-top: 1px;
    padding-left: 1px;
    border: 1px solid #777;
    background-color: #fff;
}

.pick-actions {
    display: flex;
    gap: 6px;
    margin-top: 4px;
    padding-top: 4px;
    border-top: 1px solid #b5b5a8;
}

.pick .btn {
    width: 32px;
    border-color: #c6c6b2;
    border-radius: 2px;
    background-color: #fdfde6;
}

.pick .btn:first-child {
    margin-right: auto;
}

.pick .btn span {
    outline: 1px dotted #999;
}

.callout {
    position: absolute;
    top: 173px;
    left: 191px;
    width: 164px;
    height: 222px;
    pointer-events: none;
}
```
